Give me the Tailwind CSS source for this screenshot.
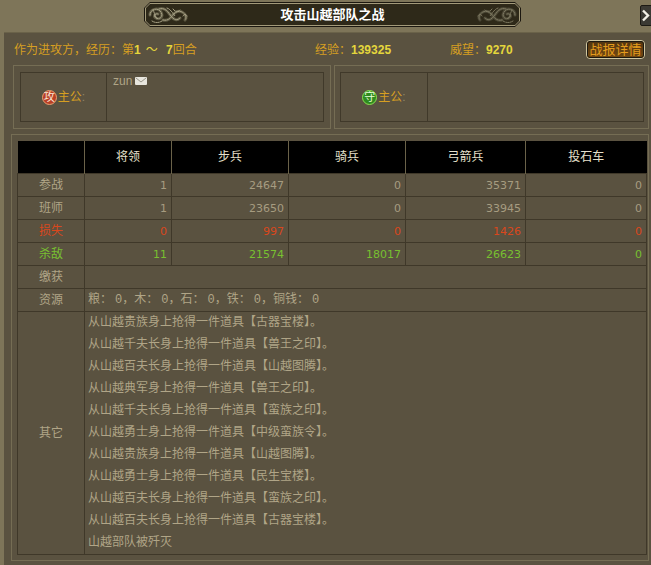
<!DOCTYPE html>
<html lang="zh">
<head>
  <meta charset="UTF-8" />
  <title>攻击山越部队之战</title>
  <script src="https://cdn.jsdelivr.net/npm/@tailwindcss/browser@4"></script>
</head>
<body class="bg-[#7e7559] w-[651px] h-[565px] overflow-hidden font-['Liberation_Sans','Noto_Sans_CJK_SC',sans-serif] text-xs text-[#b0a587]">

  <!-- 标题栏 -->
  <header class="h-[32px] flex items-start pt-[2px] pl-[144px]">
    <div class="w-[377px] h-[25px] shrink-0 bg-[#1c1810] p-px [clip-path:polygon(6px_0,371px_0,377px_6px,377px_19px,371px_25px,6px_25px,0_19px,0_6px)]">
      <div class="h-full bg-[#a39a7a] p-px [clip-path:polygon(5px_0,370px_0,375px_5px,375px_18px,370px_23px,5px_23px,0_18px,0_5px)]">
        <div class="h-full bg-[#2e2919] flex items-center justify-between pl-[1px] pr-[1px] [clip-path:polygon(4px_0,369px_0,373px_4px,373px_17px,369px_21px,4px_21px,0_17px,0_4px)]">
          <svg width="44" height="19" viewBox="0 0 44 19" fill="none" stroke-linecap="round">
            <g stroke="#5f5a44" stroke-width="3">
              <path d="M3 10c0-6 8-8 11-3s-2 8-5 6-1-5 2-4"/>
              <path d="M12 4c6-2 9 3 12 7s6 5 9 2"/>
              <path d="M16 15c4 1 7-1 9-4s6-6 10-4 5 6 3 8"/>
            </g>
            <g stroke="#a8a286" stroke-width="1" stroke-dasharray="3 1">
              <path d="M3 10c0-6 8-8 11-3s-2 8-5 6-1-5 2-4"/>
              <path d="M12 4c6-2 9 3 12 7s6 5 9 2"/>
              <path d="M16 15c4 1 7-1 9-4s6-6 10-4 5 6 3 8"/>
              <path d="M26 4c2 3 5 3 7 1M5 16c3 2 7 2 10 0M36 11c1-2 3-2 4 0M6 5c2 3 1 6 4 8M20 3c3 1 5 4 8 8"/>
            </g>
          </svg>
          <h1 class="font-bold text-[13px] leading-none text-white">攻击山越部队之战</h1>
          <svg width="44" height="19" viewBox="0 0 44 19" fill="none" stroke-linecap="round" class="-scale-x-100">
            <g stroke="#4c4836" stroke-width="3">
              <path d="M3 10c0-6 8-8 11-3s-2 8-5 6-1-5 2-4"/>
              <path d="M12 4c6-2 9 3 12 7s6 5 9 2"/>
              <path d="M16 15c4 1 7-1 9-4s6-6 10-4 5 6 3 8"/>
            </g>
            <g stroke="#7d7860" stroke-width="1" stroke-dasharray="3 1">
              <path d="M3 10c0-6 8-8 11-3s-2 8-5 6-1-5 2-4"/>
              <path d="M12 4c6-2 9 3 12 7s6 5 9 2"/>
              <path d="M16 15c4 1 7-1 9-4s6-6 10-4 5 6 3 8"/>
              <path d="M26 4c2 3 5 3 7 1M5 16c3 2 7 2 10 0M36 11c1-2 3-2 4 0M6 5c2 3 1 6 4 8M20 3c3 1 5 4 8 8"/>
            </g>
          </svg>
        </div>
      </div>
    </div>
    <button class="ml-[119px] mt-[3px] w-[14px] h-[21px] shrink-0 rounded-[2px] bg-[#3b3a34] border border-[#1c1a14] flex items-center pl-[1px]">
      <svg width="9" height="13" viewBox="0 0 9 13" fill="none" stroke="#f2f0e6" stroke-width="2.4"><path d="M1 1.5l5 5-5 5"/></svg>
    </button>
  </header>

  <!-- 主面板 -->
  <main class="ml-[4px] h-[533px] bg-[#5a5240] border-t border-[#6a6249]">
    <!-- 战况摘要 -->
    <div class="h-[32px] flex items-center text-[#d69f22]">
      <p class="ml-[10px] w-[301px] mt-[2px]">作为进攻方，经历：第<b class="text-[#e4d63c]">1</b><span class="text-[#e4d63c] mx-[5px]">～</span><b class="text-[#e4d63c]">&nbsp;7</b>回合</p>
      <p class="w-[135px] mt-[2px]">经验：<b class="text-[#e4d63c]">139325</b></p>
      <p class="w-[136px] mt-[2px]">威望：<b class="text-[#e4d63c]">9270</b></p>
      <button class="w-[59px] h-[19px] rounded-[4px] bg-linear-to-b from-[#4f3410] to-[#754a10] border border-[#cfc6a0] outline outline-1 outline-[#1c1810] -outline-offset-2 text-[13px] leading-none text-[#e49c1c] whitespace-nowrap">战报详情</button>
    </div>

    <!-- 双方主公 -->
    <div class="flex gap-[3px] pl-[9px]">
      <section class="w-[318px] h-[64px] border border-[#756d54] p-[6px]">
        <div class="h-full flex border border-[#40392a]">
          <div class="w-[86px] flex items-center justify-center border-r border-[#40392a] text-[#d69f22]">
            <span class="w-[15px] h-[15px] rounded-full bg-[#b93f26] border border-[#e8a070] flex items-center justify-center text-[11px] leading-none text-[#fbe9d8]">攻</span>
            <span class="ml-px">主公<span class="text-[#8f8668]">:</span></span>
          </div>
          <div class="pl-[6px] pt-px leading-[14px] flex items-start gap-[3px]">
            <span>zun</span>
            <svg width="12" height="8" viewBox="0 0 12 8" class="mt-[3px]"><rect width="12" height="8" rx="1" fill="#e8e6de"/><path d="M1 1l5 4 5-4" fill="none" stroke="#9a978a"/></svg>
          </div>
        </div>
      </section>
      <section class="w-[315px] h-[64px] border border-[#756d54] pl-[5px] pr-[4px] py-[6px]">
        <div class="h-full flex border border-[#40392a]">
          <div class="w-[87px] flex items-center justify-center border-r border-[#40392a] text-[#d69f22]">
            <span class="w-[15px] h-[15px] rounded-full bg-[#2f8a20] border border-[#8be050] flex items-center justify-center text-[11px] leading-none text-[#eaffd8]">守</span>
            <span class="ml-px">主公<span class="text-[#8f8668]">:</span></span>
          </div>
        </div>
      </section>
    </div>

    <!-- 战报表格 -->
    <section class="mt-[5px] ml-[7px] w-[638px] h-[427px] border border-[#756d54] pt-[6px] pl-[5px]">
      <table class="table-fixed w-[629px] border-collapse">
        <colgroup>
          <col class="w-[67px]" /><col class="w-[87px]" /><col class="w-[117px]" /><col class="w-[117px]" /><col class="w-[120px]" /><col class="w-[121px]" />
        </colgroup>
        <thead class="bg-black text-[#e6e0cc]">
          <tr class="h-[32px]">
            <th class="font-normal"></th>
            <th class="font-normal border-l border-[#6a6249]">将领</th>
            <th class="font-normal border-l border-[#6a6249]">步兵</th>
            <th class="font-normal border-l border-[#6a6249]">骑兵</th>
            <th class="font-normal border-l border-[#6a6249]">弓箭兵</th>
            <th class="font-normal border-l border-[#6a6249]">投石车</th>
          </tr>
        </thead>
        <tbody class="[&_td]:border [&_td]:border-[#3f3829] font-['DejaVu_Sans','Noto_Sans_CJK_SC',sans-serif] text-[11px]">
          <tr class="h-[23px] [&>td+td]:text-right [&>td+td]:pr-[4px] [&>td+td]:pt-[3px] [&>td+td]:text-[#a69c80]">
            <td class="text-center text-xs">参战</td>
            <td>1</td><td>24647</td><td>0</td><td>35371</td><td>0</td>
          </tr>
          <tr class="h-[23px] [&>td+td]:text-right [&>td+td]:pr-[4px] [&>td+td]:pt-[3px] [&>td+td]:text-[#a69c80]">
            <td class="text-center text-xs">班师</td>
            <td>1</td><td>23650</td><td>0</td><td>33945</td><td>0</td>
          </tr>
          <tr class="h-[23px] text-[#d9471d] [&>td+td]:text-right [&>td+td]:pr-[4px] [&>td+td]:pt-[3px]">
            <td class="text-center text-xs">损失</td>
            <td>0</td><td>997</td><td>0</td><td>1426</td><td>0</td>
          </tr>
          <tr class="h-[23px] text-[#78c030] [&>td+td]:text-right [&>td+td]:pr-[4px] [&>td+td]:pt-[3px]">
            <td class="text-center text-xs">杀敌</td>
            <td>11</td><td>21574</td><td>18017</td><td>26623</td><td>0</td>
          </tr>
          <tr class="h-[23px]">
            <td class="text-center text-xs">缴获</td>
            <td colspan="5"></td>
          </tr>
          <tr class="h-[23px]">
            <td class="text-center text-xs">资源</td>
            <td colspan="5" class="pl-[3px] text-xs font-['Liberation_Mono','Noto_Sans_CJK_SC',monospace] [&>span]:ml-[3px]">粮：<span>0</span>，木：<span>0</span>，石：<span>0</span>，铁：<span>0</span>，铜钱：<span>0</span></td>
          </tr>
          <tr>
            <td class="text-center text-xs">其它</td>
            <td colspan="5" class="pl-[3px] text-xs font-['Liberation_Sans','Noto_Sans_CJK_SC',sans-serif] [&>div]:h-[22px] [&>div]:leading-[21px]">
              <div>从山越贵族身上抢得一件道具【古器宝楼】。</div>
              <div>从山越千夫长身上抢得一件道具【兽王之印】。</div>
              <div>从山越百夫长身上抢得一件道具【山越图腾】。</div>
              <div>从山越典军身上抢得一件道具【兽王之印】。</div>
              <div>从山越千夫长身上抢得一件道具【蛮族之印】。</div>
              <div>从山越勇士身上抢得一件道具【中级蛮族令】。</div>
              <div>从山越贵族身上抢得一件道具【山越图腾】。</div>
              <div>从山越勇士身上抢得一件道具【民生宝楼】。</div>
              <div>从山越百夫长身上抢得一件道具【蛮族之印】。</div>
              <div>从山越百夫长身上抢得一件道具【古器宝楼】。</div>
              <div>山越部队被歼灭</div>
            </td>
          </tr>
        </tbody>
      </table>
    </section>
  </main>
</body>
</html>
